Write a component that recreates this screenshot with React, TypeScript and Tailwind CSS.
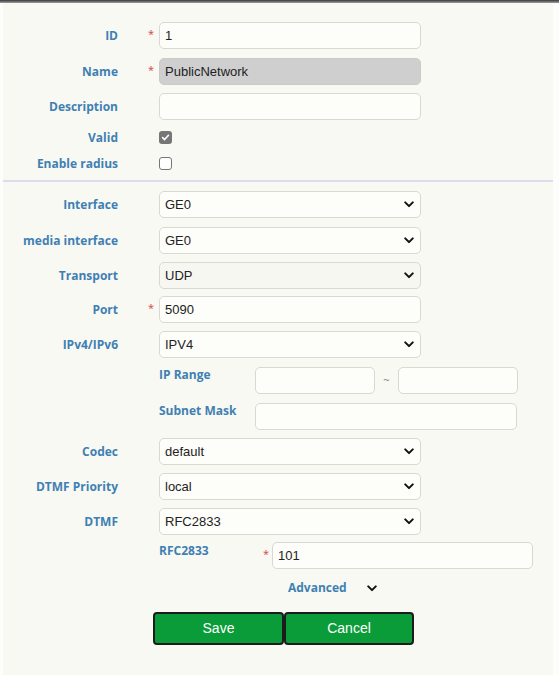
import type { ReactNode } from 'react'

const labelCls = "w-[115px] shrink-0 text-right text-[12px] font-bold text-[#3f80b3] font-['Open_Sans',sans-serif]"
const subLabelCls = "shrink-0 text-[12px] font-bold text-[#3f80b3] font-['Open_Sans',sans-serif]"
const inputCls =
  "h-[27px] rounded-[5px] border border-[#d9d9d4] bg-[#fdfdf9] px-[5px] text-[13px] text-[#222] font-['Liberation_Sans',Arial,sans-serif] outline-none"

function Star() {
  return <span className="text-[11px] leading-none text-[#d9534f] -mt-[4px]">*</span>
}

function Row({ label, required, mt, h = 'h-[27px]', children }: { label: string; required?: boolean; mt: string; h?: string; children: ReactNode }) {
  return (
    <div className={`flex items-center ${h} ${mt}`}>
      <span className={labelCls}>{label}</span>
      <span className="w-[41px] shrink-0 pl-[30px] flex items-center">{required && <Star />}</span>
      {children}
    </div>
  )
}

function Chevron({ className = '' }: { className?: string }) {
  return (
    <svg viewBox="0 0 12 8" className={`w-[10px] h-[7px] ${className}`} fill="none" stroke="#111" strokeWidth="2.4" strokeLinecap="round" strokeLinejoin="round">
      <path d="M1.5 1.5 6 6l4.5-4.5" />
    </svg>
  )
}

function Select({ value, bg = 'bg-[#fdfdf9]' }: { value: string; bg?: string }) {
  return (
    <div className={`relative w-[262px] h-[27px] rounded-[5px] border border-[#d9d9d4] ${bg} flex items-center px-[5px] text-[13px] text-[#222] font-['Liberation_Sans',Arial,sans-serif]`}>
      <span>{value}</span>
      <Chevron className="absolute right-[6px] top-[9px]" />
    </div>
  )
}

function Checkbox({ checked }: { checked?: boolean }) {
  return checked ? (
    <span className="w-[13px] h-[13px] rounded-[3px] bg-[#767676] flex items-center justify-center">
      <svg viewBox="0 0 10 10" className="w-[9px] h-[9px]" fill="none" stroke="#fff" strokeWidth="1.8" strokeLinecap="round" strokeLinejoin="round">
        <path d="M1.8 5.2 4 7.3 8.3 2.5" />
      </svg>
    </span>
  ) : (
    <span className="w-[13px] h-[13px] rounded-[3px] border border-[#767676] bg-white" />
  )
}

export default function App() {
  return (
    <div className="min-h-screen bg-[#fdfdfb] flex flex-col">
      <div className="h-[3px] bg-gradient-to-b from-[#3a3a3a] to-[#a0a0a0]" />
      <div className="mx-[3px] w-[550px] flex-1 bg-[#f9f9f3] pt-[19px] pb-[30px]">
        <Row label="ID" required mt="">
          <input className={`${inputCls} w-[262px]`} defaultValue="1" />
        </Row>
        <Row label="Name" required mt="mt-[9px]">
          <input className={`${inputCls} w-[262px] !bg-[#cfcfcf] !border-[#cacaca]`} defaultValue="PublicNetwork" disabled />
        </Row>
        <Row label="Description" mt="mt-[8px]">
          <input className={`${inputCls} w-[262px]`} defaultValue="" />
        </Row>
        <Row label="Valid" mt="mt-[11px]" h="h-[13px]">
          <Checkbox checked />
        </Row>
        <Row label="Enable radius" mt="mt-[13px]" h="h-[13px]">
          <Checkbox />
        </Row>

        <div className="mt-[10px] h-[2px] bg-[#dcdcef]" />

        <Row label="Interface" mt="mt-[9px]">
          <Select value="GE0" />
        </Row>
        <Row label="media interface" mt="mt-[9px]">
          <Select value="GE0" />
        </Row>
        <Row label="Transport" mt="mt-[8px]">
          <Select value="UDP" bg="bg-[#f7f7f2]" />
        </Row>
        <Row label="Port" required mt="mt-[7px]">
          <input className={`${inputCls} w-[262px]`} defaultValue="5090" />
        </Row>
        <Row label="IPv4/IPv6" mt="mt-[8px]">
          <Select value="IPV4" />
        </Row>
        <div className="flex items-start mt-[9px] pl-[156px]">
          <span className={`${subLabelCls} w-[96px] -mt-[1px]`}>IP Range</span>
          <input className={`${inputCls} w-[120px]`} />
          <span className="w-[23px] text-center text-[11px] text-[#888] pt-[5px]">~</span>
          <input className={`${inputCls} w-[120px]`} />
        </div>
        <div className="flex items-start mt-[9px] pl-[156px]">
          <span className={`${subLabelCls} w-[96px] -mt-[1px]`}>Subnet Mask</span>
          <input className={`${inputCls} w-[262px]`} />
        </div>
        <Row label="Codec" mt="mt-[8px]">
          <Select value="default" />
        </Row>
        <Row label="DTMF Priority" mt="mt-[8px]">
          <Select value="local" />
        </Row>
        <Row label="DTMF" mt="mt-[8px]">
          <Select value="RFC2833" />
        </Row>
        <div className="flex items-center mt-[7px] pl-[156px]">
          <span className={`${subLabelCls} w-[104px] -mt-[10px]`}>RFC2833</span>
          <span className="w-[9px] flex"><Star /></span>
          <input className={`${inputCls} w-[261px]`} defaultValue="101" />
        </div>
        <div className="flex items-center h-[18px] mt-[10px] pl-[285px] gap-[20px]">
          <span className={subLabelCls}>Advanced</span>
          <Chevron />
        </div>
        <div className="flex mt-[15px] pl-[150px]">
          <button className="w-[131px] h-[33px] rounded-[4px] border-2 border-[#1c1c1c] bg-[#0b9c3a] text-white text-[14px] font-['Liberation_Sans',Arial,sans-serif]">
            Save
          </button>
          <button className="w-[130px] h-[33px] rounded-[4px] border-2 border-[#1c1c1c] bg-[#0b9c3a] text-white text-[14px] font-['Liberation_Sans',Arial,sans-serif]">
            Cancel
          </button>
        </div>
      </div>
    </div>
  )
}
